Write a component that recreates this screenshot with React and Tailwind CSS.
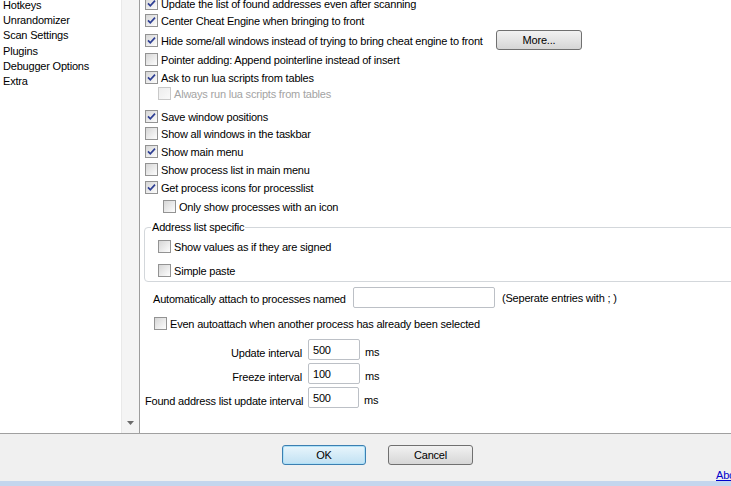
import { useId } from "react";

const font = { fontFamily: '"Liberation Sans", Arial, sans-serif' };

function Box({ checked, disabled }) {
  const id = useId();
  return (
    <svg width="13" height="13" viewBox="0 0 13 13" className="shrink-0">
      <defs>
        <linearGradient id={id} x1="0" y1="0" x2="1" y2="1">
          <stop offset="0" stopColor={disabled ? "#ececec" : "#d4d4d4"} />
          <stop offset="1" stopColor={disabled ? "#fafafa" : "#ffffff"} />
        </linearGradient>
      </defs>
      <rect x="0.5" y="0.5" width="12" height="12" fill={`url(#${id})`} stroke={disabled ? "#c9c9c9" : "#939393"} />
      {checked && (
        <path d="M3 6.3 L5.3 8.8 L10 3.6" fill="none" stroke="#2e3f94" strokeWidth="1.7" />
      )}
    </svg>
  );
}

function Check({ label, checked, disabled, className = "" }) {
  return (
    <div className={`flex items-center h-[17px] ${className}`}>
      <Box checked={checked} disabled={disabled} />
      <span className={`ml-[3px] pt-[2px] whitespace-nowrap ${disabled ? "text-[#a3a3a3]" : ""}`}>{label}</span>
    </div>
  );
}

function Field({ value, className = "" }) {
  return (
    <div className={`h-[21px] border border-[#bcc0c6] rounded-[2px] bg-white pl-[4px] pt-[1px] flex items-center ${className}`}>
      {value}
    </div>
  );
}

function Interval({ label, value, className, inputW }) {
  return (
    <div className={`flex items-center h-[21px] ${className}`}>
      <div className="w-[157px] text-right pt-[7px] whitespace-nowrap">{label}</div>
      <Field value={value} className={`ml-[6px] ${inputW}`} />
      <div className="ml-[5px] pt-[5px]">ms</div>
    </div>
  );
}

function WinButton({ children, primary, className = "" }) {
  return (
    <div
      className={`h-[20px] rounded-[3px] border flex items-center justify-center pt-[1px] ${
        primary
          ? "border-[#3c7fb1] bg-gradient-to-b from-[#e8f5fc] to-[#c1e1f3] shadow-[inset_0_0_0_1px_#aee1f8]"
          : "border-[#707070] bg-gradient-to-b from-[#f2f2f2] to-[#d6d6d6]"
      } ${className}`}
    >
      {children}
    </div>
  );
}

export default function App() {
  const tree = ["Hotkeys", "Unrandomizer", "Scan Settings", "Plugins", "Debugger Options", "Extra"];
  return (
    <div style={font} className="w-[731px] h-[486px] overflow-hidden flex flex-col text-[11px] tracking-[-0.2px] text-black bg-[#f0f0f0]">
      <div className="flex h-[434px] shrink-0 border-b border-[#a0a0a0]">
        <div className="w-[121px] bg-white overflow-hidden">
          <div className="-mt-[2px] pl-[3px] leading-[15.2px]">
            {tree.map((t) => (
              <div key={t} className="whitespace-nowrap">{t}</div>
            ))}
          </div>
        </div>
        <div className="w-[18px] bg-[#f4f4f4] border-l border-[#e9e9e9] flex flex-col justify-end items-center pb-[8px]">
          <svg width="7" height="4" viewBox="0 0 7 4">
            <path d="M0 0 H7 L3.5 4 Z" fill="#6b6b6b" />
          </svg>
        </div>
        <div className="flex-1 bg-white border-l border-[#9d9d9d] overflow-hidden">
          <div className="flex flex-col pl-[5px] -mt-[5px]">
            <Check checked label="Update the list of found addresses even after scanning" />
            <Check checked label="Center Cheat Engine when bringing to front" />
            <div className="flex items-center h-[20px] mt-[1px]">
              <Box checked />
              <span className="ml-[3px] pt-[2px] w-[335px] whitespace-nowrap">
                Hide some/all windows instead of trying to bring cheat engine to front
              </span>
              <WinButton className="w-[86px] h-[18px]">More...</WinButton>
            </div>
            <Check className="mt-[1px]" label="Pointer adding: Append pointerline instead of insert" />
            <Check className="mt-[1px]" checked label="Ask to run lua scripts from tables" />
            <Check className="-mt-[1px] pl-[13px]" disabled label="Always run lua scripts from tables" />
            <Check className="mt-[6px]" checked label="Save window positions" />
            <Check label="Show all windows in the taskbar" />
            <Check className="mt-[1px]" checked label="Show main menu" />
            <Check className="mt-[1px]" label="Show process list in main menu" />
            <Check className="mt-[1px]" checked label="Get process icons for processlist" />
            <Check className="mt-[2px] pl-[18px]" label="Only show processes with an icon" />

            <fieldset className="mt-[5px] -ml-[1px] w-[640px] border border-[#d3d7db] rounded-[4px] p-0">
              <legend className="ml-[6px] px-[1px] leading-[13px] pt-[1px]">Address list specific</legend>
              <div className="pl-[13px] pb-[2px]">
                <Check className="mt-[4px]" label="Show values as if they are signed" />
                <Check className="mt-[7px]" label="Simple paste" />
              </div>
            </fieldset>

            <div className="flex items-center h-[21px] mt-[5px] pl-[8px]">
              <span className="w-[200px] pt-[3px] whitespace-nowrap">Automatically attach to processes named</span>
              <Field className="w-[142px]" />
              <span className="ml-[7px] pt-[2px] whitespace-nowrap">(Seperate entries with ; )</span>
            </div>
            <Check className="mt-[7px] pl-[9px]" label="Even autoattach when another process has already been selected" />

            <Interval className="mt-[7px]" label="Update interval" value="500" inputW="w-[52px]" />
            <Interval className="mt-[3px]" label="Freeze interval" value="100" inputW="w-[52px]" />
            <Interval className="mt-[3px]" label="Found address list update interval" value="500" inputW="w-[51px]" />
          </div>
        </div>
      </div>

      <div className="flex-1 flex flex-col">
        <div className="flex pl-[282px] pt-[11px]">
          <WinButton primary className="w-[84px]">OK</WinButton>
          <WinButton className="ml-[22px] w-[85px]">Cancel</WinButton>
        </div>
        <div className="mt-[4px] pl-[716px] whitespace-nowrap leading-[12px]">
          <span className="text-[#0000cc] underline">About</span>
        </div>
      </div>
      <div className="h-[5px] shrink-0 bg-[#c4d6ee]" />
    </div>
  );
}
